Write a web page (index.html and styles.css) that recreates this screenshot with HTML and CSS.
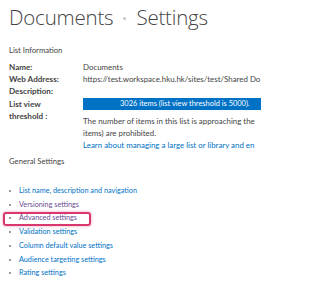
FILE: index.html
```html
<!DOCTYPE html>
<html>
<head>
<meta charset="utf-8">
<link rel="stylesheet" href="styles.css">
</head>
<body>
<div class="page">
  <h1 class="title"><span>Documents</span><span class="sep"></span><span>Settings</span></h1>
  <div class="section-title info-title">List Information</div>
  <div class="info">
    <div class="row"><div class="label">Name:</div><div class="value">Documents</div></div>
    <div class="row"><div class="label">Web Address:</div><div class="value">https://test.workspace.hku.hk/sites/test/Shared Do</div></div>
    <div class="row"><div class="label">Description:</div><div class="value"></div></div>
    <div class="row threshold"><div class="label">List view<br>threshold :</div>
      <div class="value">
        <div class="bar">3026 items (list view threshold is 5000).</div>
        <div class="note">The number of items in this list is approaching the<br>items) are prohibited.<br><a class="link" href="#">Learn about managing a large list or library and en</a></div>
      </div>
    </div>
  </div>
  <div class="section-title general-title">General Settings</div>
  <ul class="settings">
    <li><a class="link" href="#">List name, description and navigation</a></li>
    <li><a class="link visited" href="#">Versioning settings</a></li>
    <li class="highlight"><a class="link visited" href="#">Advanced settings</a><span class="ring"></span></li>
    <li><a class="link" href="#">Validation settings</a></li>
    <li><a class="link" href="#">Column default value settings</a></li>
    <li><a class="link" href="#">Audience targeting settings</a></li>
    <li><a class="link" href="#">Rating settings</a></li>
  </ul>
</div>
</body>
</html>
```
FILE: styles.css
```css
html, body {
  margin: 0;
  padding: 0;
  background: #fff;
}
body {
  font-family: "Lato", "Open Sans", sans-serif;
  font-size: 7.9px;
  color: #444;
  width: 261px;
  height: 287px;
  overflow: hidden;
}
.page {
  padding-left: 9px;
  white-space: nowrap;
  overflow: hidden;
}
.title {
  margin: 0;
  padding-top: 1px;
  height: 32px;
  font-family: "Open Sans", sans-serif;
  font-weight: 300;
  font-size: 20.5px;
  line-height: 28px;
  letter-spacing: -0.2px;
  color: #444;
  display: flex;
  align-items: center;
}
.sep {
  width: 3px;
  height: 3px;
  border-radius: 50%;
  background: #c4c4c4;
  margin: 2px 10px 0 10px;
}
.section-title {
  font-size: 7.7px;
  line-height: 12px;
  color: #444;
}
.info-title {
  margin-top: 11px;
}
.info {
  margin-top: 5px;
}
.row {
  display: grid;
  grid-template-columns: 74px 1fr;
  line-height: 12px;
  min-height: 12px;
}
.label {
  font-weight: 700;
  font-size: 8.1px;
  color: #444;
}
.value {
  color: #444;
  overflow: hidden;
}
.threshold {
  margin-top: 1px;
}
.bar {
  background: #0072c6;
  color: #fff;
  height: 12px;
  line-height: 12px;
  font-size: 7.45px;
  padding-left: 37px;
}
.note {
  margin-top: 5px;
  line-height: 12px;
}
.link {
  color: #0072c6;
  text-decoration: none;
}
.link.visited {
  color: #6a4c93;
}
.general-title {
  margin-top: 4px;
}
.settings {
  list-style: none;
  margin: 17px 0 0 0;
  padding: 0;
  font-size: 7.25px;
}
.settings li {
  position: relative;
  line-height: 13.7px;
  padding-left: 10px;
}
.settings li::before {
  content: "";
  position: absolute;
  left: 0;
  top: 6px;
  width: 2px;
  height: 2px;
  background: #9a9a9a;
}
.ring {
  position: absolute;
  left: -6px;
  top: 1px;
  width: 84px;
  height: 10px;
  border: 2px solid #d9386e;
  border-radius: 3px;
  box-shadow: 0 0 3px rgba(217, 56, 110, 0.5);
}
```
